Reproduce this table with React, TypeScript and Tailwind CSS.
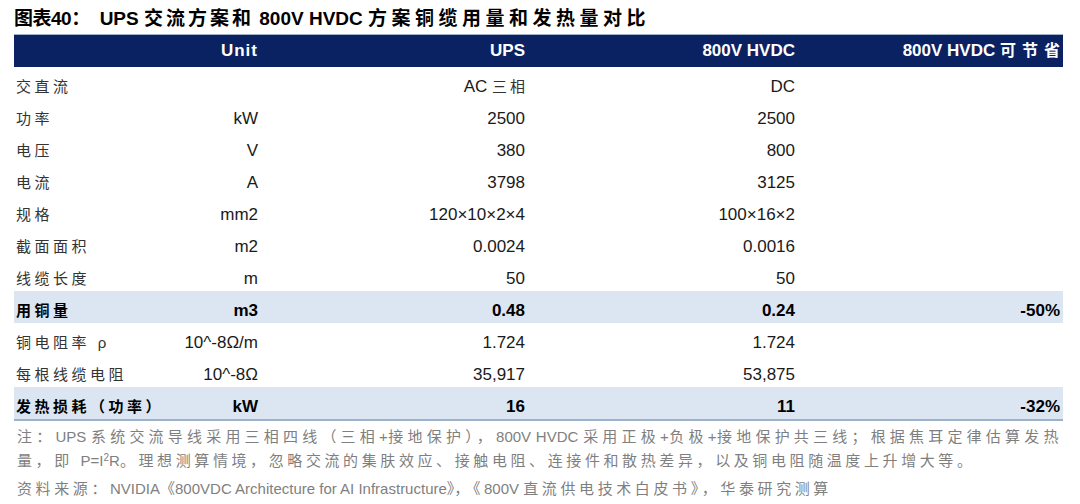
const rows: { label: string; unit: string; ups: string; hvdc: string; save?: string; bold?: boolean }[] = [
  { label: "交直流", unit: "", ups: "AC 三相", hvdc: "DC" },
  { label: "功率", unit: "kW", ups: "2500", hvdc: "2500" },
  { label: "电压", unit: "V", ups: "380", hvdc: "800" },
  { label: "电流", unit: "A", ups: "3798", hvdc: "3125" },
  { label: "规格", unit: "mm2", ups: "120×10×2×4", hvdc: "100×16×2" },
  { label: "截面面积", unit: "m2", ups: "0.0024", hvdc: "0.0016" },
  { label: "线缆长度", unit: "m", ups: "50", hvdc: "50" },
  { label: "用铜量", unit: "m3", ups: "0.48", hvdc: "0.24", save: "-50%", bold: true },
  { label: "铜电阻率 ρ", unit: "10^-8Ω/m", ups: "1.724", hvdc: "1.724" },
  { label: "每根线缆电阻", unit: "10^-8Ω", ups: "35,917", hvdc: "53,875" },
  { label: "发热损耗（功率）", unit: "kW", ups: "16", hvdc: "11", save: "-32%", bold: true },
];

const cols = "grid grid-cols-[150px_94px_267px_270px_265px] pr-[3px]";

function Lat({ children }: { children: React.ReactNode }) {
  return <span className="tracking-normal">{children}</span>;
}

export default function App() {
  return (
    <div className="w-[1080px] h-[504px] overflow-hidden bg-white text-[#1a1a1a] font-['Liberation_Sans','Noto_Sans_CJK_SC',sans-serif]">
      <div className="h-[34px] pl-[14px] pt-[8px] text-[19px] leading-[22px] font-bold text-black whitespace-nowrap">
        <span className="tracking-[-0.5px]">图表40：</span>
        <span className="ml-[10px]">UPS </span>
        <span className="tracking-[3px]">交流方案和</span>
        <span> 800V HVDC </span>
        <span className="tracking-[4.5px]">方案铜缆用量和发热量对比</span>
      </div>

      <div className="ml-[14px] w-[1049px]">
        <div className={`${cols} h-[33px] border-t border-[#9fb2c9] bg-[#0b2262] text-white font-bold text-[17px] leading-[32px]`}>
          <div />
          <div className="text-right tracking-[1px]">Unit</div>
          <div className="text-right">UPS</div>
          <div className="text-right">800V HVDC</div>
          <div className="text-right whitespace-nowrap">
            800V HVDC <span className="tracking-[6px] mr-[-6px] text-[16px]">可节省</span>
          </div>
        </div>

        <div className="border-b-2 border-[#9db1ca]">
          {rows.map((r) => (
            <div
              key={r.label}
              className={`${cols} h-[32px] pt-[10px] text-[17px] leading-[20px] ${r.bold ? "bg-[#dce6f2] font-bold text-black" : ""}`}
            >
              <div className={`pl-[2px] whitespace-nowrap text-[15px] tracking-[3.5px] ${r.bold ? "font-bold" : "text-[#333]"}`}>
                {r.label.endsWith(" ρ") ? (
                  <>
                    {r.label.slice(0, -2)} <Lat>ρ</Lat>
                  </>
                ) : (
                  r.label
                )}
              </div>
              <div className="text-right whitespace-nowrap">{r.unit}</div>
              <div className="text-right whitespace-nowrap">
                {r.ups === "AC 三相" ? (
                  <>
                    AC <span className="text-[15px] tracking-[3px] mr-[-3px] text-[#333]">三相</span>
                  </>
                ) : (
                  r.ups
                )}
              </div>
              <div className="text-right whitespace-nowrap">{r.hvdc}</div>
              <div className="text-right whitespace-nowrap">{r.save ?? ""}</div>
            </div>
          ))}
        </div>
      </div>

      <div className="pl-[17px] pr-[18px] pt-[4px] text-[15px] text-[#7f7f7f] leading-[24px] tracking-[3.6px]">
        <div className="text-justify [text-align-last:justify] whitespace-nowrap">
          注：<Lat>UPS </Lat>系统交流导线采用三相四线（三相<Lat>+</Lat>接地保护），<Lat>800V HVDC </Lat>采用正极<Lat>+</Lat>负极<Lat>+</Lat>接地保护共三线；根据焦耳定律估算发热
        </div>
        <div className="whitespace-nowrap">
          量，即 <Lat>
            P=I<sup className="text-[10px]">2</sup>R
          </Lat>。理想测算情境，忽略交流的集肤效应、接触电阻、连接件和散热差异，以及铜电阻随温度上升增大等。
        </div>
        <div className="mt-[4px] whitespace-nowrap">
          资料来源：<Lat>NVIDIA《800VDC Architecture for AI Infrastructure》</Lat>，《<Lat>800V </Lat>直流供电技术白皮书》，华泰研究测算
        </div>
      </div>
    </div>
  );
}
